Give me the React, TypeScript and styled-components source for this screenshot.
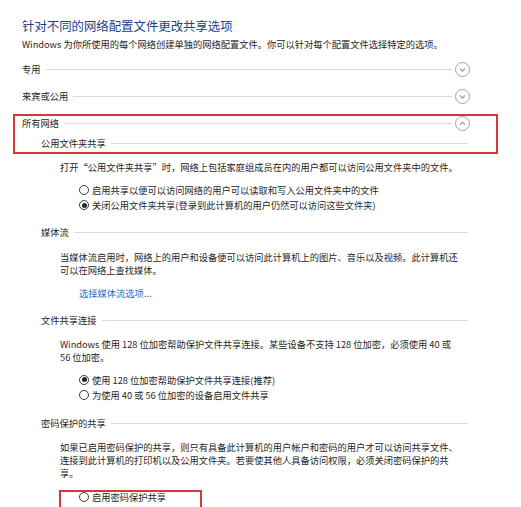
import React from 'react';
import styled, { createGlobalStyle } from 'styled-components';

const GlobalStyle = createGlobalStyle`
    html, body {
        margin: 0;
        padding: 0;
        background: #ffffff;
    }
    body {
        font-family: 'Noto Sans CJK SC', 'Noto Sans', sans-serif;
        color: #262626;
    }
`;

const Page = styled.div`
    width: 521px;
    height: 507px;
    overflow: hidden;
    box-sizing: border-box;
    padding: 17px 51px 0 22px;
    font-size: 9.25px;
`;

const Title = styled.h1`
    margin: 0;
    font-size: 12.4px;
    line-height: 18px;
    font-weight: 400;
    color: #233f8e;
    white-space: nowrap;
`;

const Intro = styled.p`
    margin: 2px 0 0;
    line-height: 14px;
    white-space: nowrap;
`;

const Profiles = styled.div`
    display: flex;
    flex-direction: column;
    gap: 13px;
    margin-top: 11px;
`;

const ProfileRow = styled.div`
    display: flex;
    align-items: center;
    height: 14px;
    white-space: nowrap;
`;

const Rule = styled.div<{ $inset?: number }>`
    flex: 1;
    height: 1px;
    background: #dadada;
    margin: 0 ${(props) => props.$inset ?? 3}px 0 5px;
`;

const Highlight = styled.div`
    box-sizing: border-box;
    border: 2px solid #d3393a;
`;

const ProfileHighlight = styled(Highlight)`
    margin: -2px -28px 0 -9px;
    padding: 0 26px 2px 7px;
`;

const OptionHighlight = styled(Highlight)`
    width: 143px;
    margin: 10.5px 0 0 37px;
    padding: 0 0 0 18px;
`;

const SubHeader = styled.div<{ $mt: number }>`
    display: flex;
    align-items: center;
    height: 14px;
    margin-top: ${(props) => props.$mt}px;
    padding-left: 19px;
    white-space: nowrap;
`;

const Para = styled.p<{ $mt: number }>`
    margin: ${(props) => props.$mt}px 0 0 38px;
    line-height: 13px;
    white-space: nowrap;
`;

const RadioGroup = styled.div<{ $mt: number; $indent?: number }>`
    display: flex;
    flex-direction: column;
    margin-top: ${(props) => props.$mt}px;
    padding-left: ${(props) => props.$indent ?? 57}px;
`;

const RadioRow = styled.label`
    display: flex;
    align-items: center;
    gap: 3px;
    height: 15px;
    white-space: nowrap;
`;

const RadioMark = styled.span<{ $checked?: boolean }>`
    position: relative;
    flex: none;
    width: 10px;
    height: 10px;
    box-sizing: border-box;
    border: 1px solid #3c3c3c;
    border-radius: 50%;
    background: #fff;
    &::after {
        content: '';
        display: ${(props) => (props.$checked ? 'block' : 'none')};
        position: absolute;
        inset: 1.5px;
        border-radius: 50%;
        background: #262626;
    }
`;

const LinkText = styled.a`
    display: block;
    margin: 10px 0 0 57px;
    line-height: 13px;
    color: #2a6ec0;
    text-decoration: none;
    white-space: nowrap;
`;

const Chevron = ({ up }: { up?: boolean }) => (
    <svg width="15" height="15" viewBox="0 0 15 15" style={{ flex: 'none' }}>
        <circle cx="7.5" cy="7.5" r="7" fill="#fff" stroke="#a3a3a3" strokeWidth="1" />
        <path
            d={up ? 'M4.8 8.8 L7.5 6.1 L10.2 8.8' : 'M4.8 6.4 L7.5 9.1 L10.2 6.4'}
            fill="none"
            stroke="#9a9a9a"
            strokeWidth="1.1"
        />
    </svg>
);

const Radio = ({ checked, children }: { checked?: boolean; children: React.ReactNode }) => (
    <RadioRow>
        <RadioMark $checked={checked} />
        {children}
    </RadioRow>
);

export default function App() {
    return (
        <>
            <GlobalStyle />
            <Page>
                <Title>针对不同的网络配置文件更改共享选项</Title>
                <Intro>Windows 为你所使用的每个网络创建单独的网络配置文件。你可以针对每个配置文件选择特定的选项。</Intro>

                <Profiles>
                    <ProfileRow>
                        专用
                        <Rule />
                        <Chevron />
                    </ProfileRow>
                    <ProfileRow>
                        来宾或公用
                        <Rule />
                        <Chevron />
                    </ProfileRow>
                    <ProfileHighlight>
                        <ProfileRow>
                            所有网络
                            <Rule />
                            <Chevron up />
                        </ProfileRow>
                        <SubHeader $mt={6}>
                            公用文件夹共享
                            <Rule $inset={2} />
                        </SubHeader>
                    </ProfileHighlight>
                </Profiles>

                <Para $mt={6.5}>打开“公用文件夹共享”时，网络上包括家庭组成员在内的用户都可以访问公用文件夹中的文件。</Para>
                <RadioGroup $mt={9}>
                    <Radio>启用共享以便可以访问网络的用户可以读取和写入公用文件夹中的文件</Radio>
                    <Radio checked>关闭公用文件夹共享(登录到此计算机的用户仍然可以访问这些文件夹)</Radio>
                </RadioGroup>

                <SubHeader $mt={12.5}>
                    媒体流
                    <Rule $inset={2} />
                </SubHeader>
                <Para $mt={11.5}>
                    当媒体流启用时，网络上的用户和设备便可以访问此计算机上的图片、音乐以及视频。此计算机还
                    <br />
                    可以在网络上查找媒体。
                </Para>
                <LinkText href="#">选择媒体流选项...</LinkText>

                <SubHeader $mt={13.5}>
                    文件共享连接
                    <Rule $inset={2} />
                </SubHeader>
                <Para $mt={10.5}>
                    Windows 使用 128 位加密帮助保护文件共享连接。某些设备不支持 128 位加密，必须使用 40 或
                    <br />
                    56 位加密。
                </Para>
                <RadioGroup $mt={8.5}>
                    <Radio checked>使用 128 位加密帮助保护文件共享连接(推荐)</Radio>
                    <Radio>为使用 40 或 56 位加密的设备启用文件共享</Radio>
                </RadioGroup>

                <SubHeader $mt={14}>
                    密码保护的共享
                    <Rule $inset={2} />
                </SubHeader>
                <Para $mt={10.5}>
                    如果已启用密码保护的共享，则只有具备此计算机的用户帐户和密码的用户才可以访问共享文件、
                    <br />
                    连接到此计算机的打印机以及公用文件夹。若要使其他人具备访问权限，必须关闭密码保护的共
                    <br />
                    享。
                </Para>
                <OptionHighlight>
                    <RadioGroup $mt={-3} $indent={0}>
                        <Radio>启用密码保护共享</Radio>
                        <Radio checked>关闭密码保护共享</Radio>
                    </RadioGroup>
                </OptionHighlight>
            </Page>
        </>
    );
}
